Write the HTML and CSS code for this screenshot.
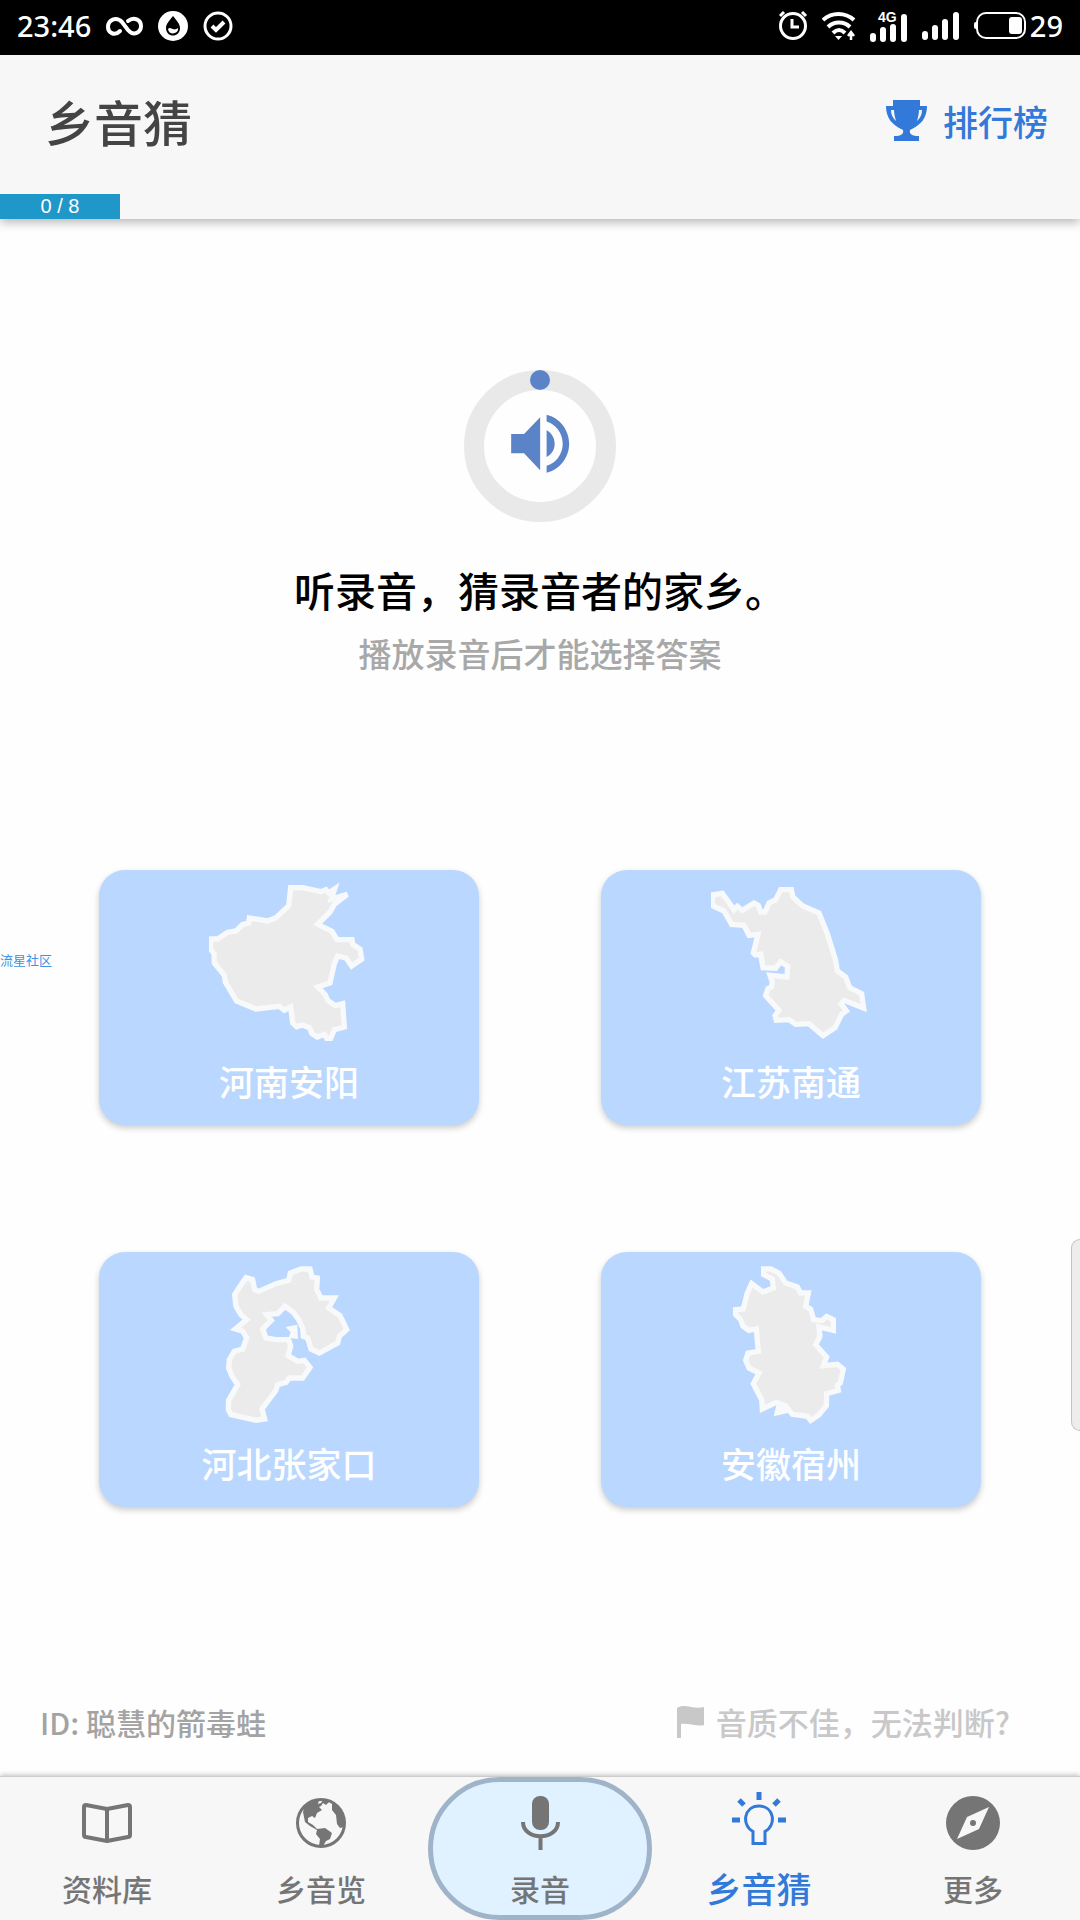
FILE: index.html
```html
<!DOCTYPE html>
<html lang="zh-CN">
<head>
<meta charset="utf-8">
<meta name="viewport" content="width=device-width, initial-scale=1">
<title>乡音猜</title>
<link rel="stylesheet" href="styles.css">
</head>
<body>
<div class="statusBar">
	<div class="left">
		<span>23:46</span>
		<svg width="37" height="30" viewBox="0 0 37 30" fill="none" stroke="#fff" stroke-width="4" stroke-linecap="round"><path d="M14 20C8 26 2 21 2 16C2 9 10 5 16 11L22 19C28 26 35 21 35 15C35 9 28 5 22 10"/></svg>
		<svg width="30" height="30" viewBox="0 0 30 30"><circle cx="15" cy="15" r="15" fill="#fff"/><path d="M15 5C11 10 8 13 8 17C8 27 22 27 22 17C22 13 19 10 15 5Z"/><path d="M10 18C13 15 15 21 20 17C21 23 11 25 10 18Z" fill="#fff"/></svg>
		<svg width="30" height="30" viewBox="0 0 30 30" fill="none" stroke="#fff" stroke-width="3"><circle cx="15" cy="15" r="13"/><path d="M9 15L13 19L21 11" stroke-width="4"/></svg>
	</div>
	<div class="right">
		<svg width="29" height="30" viewBox="0 0 29 30" fill="none" stroke="#fff" stroke-width="3"><circle cx="14" cy="15" r="12.5"/><path d="M13 8V16H20M1 5L5 1M23 1L27 5"/></svg>
		<svg width="34" height="30" viewBox="0 0 34 30" fill="none" stroke="#fff" stroke-width="4"><path d="M1 9C10 1 23 1 32 9M6 16C12 10 22 10 28 16M11 22C15 18 19 18 23 22"/><path d="M13 25H20L16.500 29Z" fill="#fff" stroke="none"/><path d="M29 29V23M26 25L29 21L32 25" stroke-width="2.500"/></svg>
		<svg width="38" height="34" viewBox="0 -4 38 34"><path d="M3 23V26M13 17V26M23 14V26M34 4V26" stroke="#fff" stroke-width="6" stroke-linecap="round"/><text x="8" y="9" class="netType">4G</text></svg>
		<svg width="38" height="30" viewBox="0 0 38 30"><path d="M3 23V26M13 17V26M23 11V26M34 4V26" stroke="#fff" stroke-width="6" stroke-linecap="round"/></svg>
		<span class="battery">
			<svg width="52" height="30" viewBox="0 0 52 30"><rect x="3" y="2" width="48" height="25" rx="9" fill="none" stroke="#fff" stroke-width="2"/><rect x="0" y="11" width="4" height="7" rx="2" fill="#fff"/><rect x="35" y="6" width="13" height="17" rx="3" fill="#fff"/></svg>
			<span>29</span>
		</span>
	</div>
</div>

<header class="header">
	<div class="top">
		<h1>乡音猜</h1>
		<a href="#rank" class="rank">
			<svg width="41" height="41" viewBox="0 0 41 41"><path fill="currentColor" fill-rule="evenodd" d="M7 0H34V6H41C41 18 35 25 24 30C23 34 26 36 33 36V41H8V36C15 36 18 34 17 30C6 25 0 18 0 6H7ZM5 10C5 15 7 18 10 21C9 17 8 14 8 10ZM36 10H33C33 14 32 17 31 21C34 18 36 15 36 10Z"/></svg>
			<span>排行榜</span>
		</a>
	</div>
	<div class="progress">0 / 8</div>
</header>

<main class="main">
	<button type="button" class="player" aria-label="播放录音">
		<svg width="152" height="152" viewBox="0 0 152 152">
			<circle cx="76" cy="76" r="66" fill="none" stroke="#e9e9e9" stroke-width="20"/>
			<circle cx="76" cy="10" r="10" fill="#5b83c7"/>
			<g fill="#5b83c7" transform="translate(37.500 35) scale(.151)">
				<path d="M64 192v128h85.334L256 431.543V80.458L149.334 192H64zm288 64c0-38.399-21.333-72.407-53.333-88.863v176.636C330.667 328.408 352 294.400 352 256zM298.667 64v44.978C360.531 127.632 405.334 186.882 405.334 256c0 69.119-44.803 128.369-106.667 147.022V448C384 428.254 448 349.257 448 256c0-93.256-64-172.254-149.333-192z"/>
			</g>
		</svg>
	</button>
	<h2 class="question">听录音，猜录音者的家乡。</h2>
	<p class="tips">播放录音后才能选择答案</p>

	<div class="options">
		<button type="button" class="option">
			<svg viewBox="359 68 480 480"><path d="M604 82L640 82L695 94L710 88L718 98L736 86L726 116L774 102L735 132L722 155L685 192L728 213L743 238L788 238L790 252L812 266L817 297L787 317L770 293L745 287L735 310L722 368L685 380L708 403L715 420L738 436L760 430L765 500L735 508L724 534L712 534L706 522L684 530L668 520L660 502L640 494L622 499L610 488L604 440L585 450L570 438L500 446L442 422L408 365L405 345L375 308L374 280L364 268L364 236L385 236L415 216L440 212L460 192L478 188L480 173L535 182L560 172L598 136Z"/></svg>
			<span>河南安阳</span>
		</button>
		<button type="button" class="option">
			<svg viewBox="366 68 480 480"><path d="M370 104L400 99L435 148L445 138L460 150L495 128L508 135L515 155L528 155L540 128L560 118L575 88L607 88L612 110L640 136L690 158L715 220L740 300L745 332L770 350L782 382L818 400L824 443L765 420L756 430L772 452L758 462L738 502L702 526L660 490L620 492L600 478L562 480L558 466L570 450L530 406L537 385L547 380L550 365L543 345L594 350L596 318L575 304L560 324L522 322L515 282L499 284L493 278L507 222L480 225L465 195L428 192L405 152L370 136Z"/></svg>
			<span>江苏南通</span>
		</button>
		<button type="button" class="option">
			<svg viewBox="359 76 480 480"><path d="M470 114L490 120L496 150L508 155L560 132L598 122L603 100L635 88L662 88L668 112L684 115L682 150L695 175L735 175L718 205L752 228L772 270L750 290L745 310L690 340L665 328L655 295L642 290L640 265L628 240L612 218L587 200L565 222L532 225L546 242L520 268L530 295L560 300L598 300L604 320L596 348L625 365L645 362L662 383L640 415L600 415L590 428L565 435L560 452L518 508L526 538L500 542L425 525L417 510L418 482L445 435L428 410L418 385L420 360L435 335L460 328L472 295L460 275L438 268L472 240L455 225L440 200L436 165L452 140Z"/><path class="solid" d="M588 262L624 255L626 298L598 294L604 278Z"/></svg>
			<span>河北张家口</span>
		</button>
		<button type="button" class="option">
			<svg viewBox="366 76 480 480"><path d="M524 88L545 88L570 100L590 130L625 142L635 160L658 160L650 200L665 208L674 240L698 243L713 230L733 240L733 272L690 262L693 290L680 315L713 352L703 378L745 374L763 388L754 430L745 437L748 452L713 462L712 498L690 525L665 542L655 530L610 524L590 498L562 488L520 508L518 480L493 432L510 400L480 385L470 362L477 340L508 335L502 268L480 272L462 260L455 240L440 225L440 210L463 208L475 160L488 132L522 157L553 145L550 118L524 105Z"/><path class="solid" d="M554 530L562 496L590 492L606 518Z"/></svg>
			<span>安徽宿州</span>
		</button>
	</div>

	<div class="info">
		<span class="userId">ID: 聪慧的箭毒蛙</span>
		<a href="#report" class="report">
			<svg width="27" height="32" viewBox="0 0 27 32"><path fill="currentColor" d="M0 2C5-1 9 0 14 1C19 2 23 2 27 1V19C20 21 12 17 4 18V32H0Z"/></svg>
			<span>音质不佳，无法判断?</span>
		</a>
	</div>
</main>

<nav class="nav">
	<a href="#library">
		<svg width="56" height="60" viewBox="0 0 56 60" fill="none" stroke="currentColor" stroke-width="4" stroke-linejoin="round"><path d="M28 18L7 14Q5 14 5 16V44Q5 46 7 46L28 50L49 46Q51 46 51 44V16Q51 14 49 14ZM28 18V50"/></svg>
		<span>资料库</span>
	</a>
	<a href="#explore">
		<svg width="56" height="60" viewBox="0 0 56 60"><circle cx="28" cy="32" r="23.500" fill="none" stroke="currentColor" stroke-width="3"/><path fill="currentColor" d="M12 15L19 10L26 9L25 13L28 12L30 9L37 10L33 14L30 12L28 15L26 16L29 19L24 22L22 27L19 25L15 27L15 31L20 34L24 38L32 37L39 42L37 48L33 50L30 55H26L27 48L23 43L24 39L17 35L12 31L10 21ZM39 12L44 15L51 26V36L47 37L44 33L43 24L39 19Z"/></svg>
		<span>乡音览</span>
	</a>
	<a href="#record" class="record">
		<svg width="56" height="60" viewBox="0 0 56 60"><rect x="20" y="5" width="17" height="34" rx="8" fill="currentColor"/><path d="M11 31C11 50 46 50 46 31M28.500 45V59" fill="none" stroke="currentColor" stroke-width="4"/></svg>
		<span>录音</span>
	</a>
	<a href="#guess" class="active">
		<svg width="56" height="60" viewBox="0 0 56 60" fill="none" stroke="currentColor"><path d="M22 52.500V40.500C10 34 13 15 28 15S46 34 34 40.500V52.500Z" stroke-width="3"/><path d="M28 1V9M1 29H9M47 29H55M8 9L13 14M48 9L43 14" stroke-width="5"/></svg>
		<span>乡音猜</span>
	</a>
	<a href="#more">
		<svg width="56" height="60" viewBox="0 0 56 60"><path fill="currentColor" fill-rule="evenodd" d="M28 5A27 27 0 1 1 28 59A27 27 0 1 1 28 5ZM44 16L22 26L12 48L34 38Z"/><circle cx="28" cy="32" r="3" fill="currentColor"/></svg>
		<span>更多</span>
	</a>
</nav>

<!-- 悬浮内容 -->
<span class="mark">流星社区</span>
<div class="handle"></div>
</body>
</html>
```
FILE: styles.css
```css
*{
	box-sizing:border-box;
}
body{
	margin:0;
	min-height:100vh;
	display:flex;
	flex-direction:column;
	position:relative;
	background-color:#fefefe;
	font-family:"Noto Sans CJK SC",sans-serif;
	font-weight:500;
	overflow-x:hidden;
}
a{
	text-decoration:none;
}
button{
	font-family:inherit;
	font-weight:inherit;
	border:none;
	padding:0;
	cursor:pointer;
}
svg{
	display:block;
	flex:none;
}

/* 状态栏 */
.statusBar{
	height:55px;
	padding:0 17px 3px 17px;
	display:flex;
	justify-content:space-between;
	align-items:center;
	background-color:#000;
	color:#fff;
	font-family:"Noto Sans",sans-serif;
	font-size:29px;
	line-height:40px;
}
.statusBar .left,
.statusBar .right{
	display:flex;
	align-items:center;
	gap:15px;
}
.statusBar .right{
	gap:14px;
}
.statusBar .battery{
	display:flex;
	align-items:center;
	gap:4px;
}
.netType{
	font-family:"Liberation Sans",sans-serif;
	font-size:14px;
	font-weight:bold;
	fill:#fff;
}

/* 头部 */
.header{
	background-color:#f7f7f7;
	box-shadow:0 3px 10px rgba(0,0,0,.3);
}
.header .top{
	height:139px;
	padding:0 32px 8px 45px;
	display:flex;
	justify-content:space-between;
	align-items:center;
}
.header h1{
	margin:0;
	font-size:49px;
	font-weight:500;
	line-height:64px;
	color:#444;
}
.rank{
	display:flex;
	align-items:center;
	gap:16px;
	font-size:35px;
	line-height:44px;
	color:#3379d9;
}
.progress{
	width:120px;
	height:25px;
	background-color:#1f97c9;
	color:#fff;
	font-family:"Liberation Sans",sans-serif;
	font-size:20px;
	font-weight:400;
	line-height:24px;
	text-align:center;
}

/* 题目 */
.main{
	flex:1;
	display:flex;
	flex-direction:column;
	padding-top:151px;
}
.player{
	align-self:center;
	border-radius:50%;
	background:none;
}
.question{
	margin:39px 0 0 0;
	font-size:41px;
	font-weight:500;
	line-height:56px;
	text-align:center;
	color:#000;
}
.tips{
	margin:14px 0 0 0;
	font-size:33px;
	line-height:44px;
	text-align:center;
	color:#a8a8a8;
}
.options{
	margin-top:195px;
	padding:0 99px;
	display:grid;
	grid-template-columns:1fr 1fr;
	gap:127px 122px;
}
.option{
	display:flex;
	flex-direction:column;
	align-items:center;
	gap:16px;
	padding:13px 0 22px 0;
	border-radius:26px;
	background-color:#b9d7ff;
	box-shadow:0 3px 6px rgba(0,0,0,.2);
	color:#fff;
	font-size:35px;
	line-height:44px;
}
.option svg{
	width:160px;
	height:160px;
	fill:#ebebeb;
	stroke:#f8f9fa;
	stroke-width:16px;
}
.option .solid{
	fill:#f8f9fa;
	stroke:none;
}

.info{
	margin-top:auto;
	padding:0 70px 32px 40px;
	display:flex;
	justify-content:space-between;
	font-size:31px;
	line-height:44px;
}
.userId{
	font-size:30px;
	color:#a3a3a3;
}
.report{
	display:flex;
	align-items:center;
	gap:12px;
	color:#c8c8c8;
}

/* 底部导航 */
.nav{
	display:flex;
	border-top:1px solid #ccc;
	background-color:#f7f7f7;
	box-shadow:0 -1px 5px rgba(0,0,0,.25);
}
.nav a{
	flex:1;
	display:flex;
	flex-direction:column;
	align-items:center;
	gap:17px;
	padding:14px 0 12px 0;
	font-size:30px;
	line-height:40px;
	color:#757575;
}
.nav .record{
	flex:0 0 224px;
	padding:9px 0 7px 0;
	border:5px solid #a0b4c9;
	border-radius:72px;
	background-color:#e0f2ff;
}
.nav .active{
	font-size:35px;
	color:#3379d9;
}

.mark{
	position:absolute;
	left:0;
	top:950px;
	font-size:13px;
	line-height:20px;
	font-weight:400;
	color:#3f92e6;
}
.handle{
	position:absolute;
	right:0;
	top:1239px;
	width:9px;
	height:192px;
	border:1px solid #c4c4c4;
	border-right:none;
	border-radius:9px 0 0 9px;
	background-color:#ededed;
}
```
